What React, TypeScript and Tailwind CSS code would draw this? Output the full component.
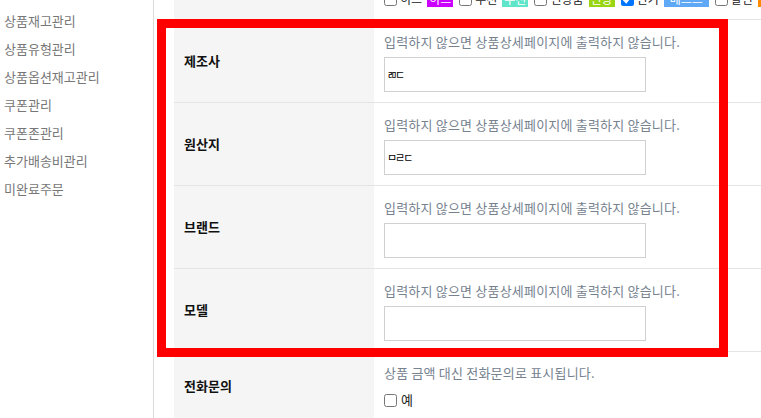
import React from "react";

const menu = ["상품재고관리", "상품유형관리", "상품옵션재고관리", "쿠폰관리", "쿠폰존관리", "추가배송비관리", "미완료주문"];

const types = [
  { label: "히트", badge: "히트", color: "bg-[#cc00ff]", pad: "px-[2px]", checked: false },
  { label: "추천", badge: "추천", color: "bg-[#5fe5c9]", pad: "px-[2px]", checked: false },
  { label: "신상품", badge: "신상", color: "bg-[#99d611]", pad: "px-[2px]", checked: false },
  { label: "인기", badge: "베스트", color: "bg-[#5fa8f5]", pad: "px-[6px]", checked: true },
  { label: "할인", badge: "할인", color: "bg-[#ff8a00]", pad: "px-[2px]", checked: false },
];

const fields = [
  { label: "제조사", value: "ㄻㄷ" },
  { label: "원산지", value: "ㅁㄹㄷ" },
  { label: "브랜드", value: "" },
  { label: "모델", value: "" },
];

const help = "입력하지 않으면 상품상세페이지에 출력하지 않습니다.";

function Row({ label, children, h }: { label: string; children: React.ReactNode; h: string }) {
  return (
    <div className={`flex border-b border-[#e4e4e4] ${h}`}>
      <div className="w-[200px] shrink-0 bg-[#f5f5f5] pl-[10px] flex items-center text-[13px] font-bold text-[#111]">
        {label}
      </div>
      <div className="flex-1 pl-[10px]">{children}</div>
    </div>
  );
}

export default function App() {
  return (
    <div className="relative h-[418px] w-[761px] overflow-hidden bg-white font-['Noto_Sans_CJK_KR',sans-serif]">
      <div className="flex h-full">
        {/* Sidebar */}
        <aside className="w-[154px] shrink-0 border-r border-[#dadada] pt-[7px]">
          {menu.map((m) => (
            <div key={m} className="h-[28px] leading-[28px] pl-[4px] text-[13px] text-[#777]">
              {m}
            </div>
          ))}
        </aside>

        {/* Form table */}
        <main className="flex-1 pl-[20px]">
          <div className="flex h-[20px] border-b border-[#e4e4e4] overflow-hidden">
            <div className="w-[200px] shrink-0 bg-[#f5f5f5]" />
            <div className="flex-1 pl-[10px] flex items-end pb-[12px] overflow-hidden">
              <div className="flex items-center whitespace-nowrap text-[12px] leading-[16px] text-[#222]">
                {types.map((t) => (
                  <div key={t.label} className="flex items-center mr-[6px]">
                    <input type="checkbox" defaultChecked={t.checked} className="m-0 h-[13px] w-[13px] accent-[#0075ff]" />
                    <span className="ml-[3px]">{t.label}</span>
                    <span className={`ml-[5px] ${t.pad} ${t.color} text-white`}>{t.badge}</span>
                  </div>
                ))}
              </div>
            </div>
          </div>

          {fields.map((f) => (
            <Row key={f.label} label={f.label} h="h-[83px]">
              <div className="pt-[13px] text-[13px] tracking-[0.2px] leading-[18px] text-[#76828f]">{help}</div>
              <div className="mt-[6px] h-[35px] w-[262px] border border-[#d0d0d0] bg-white pl-[2px] flex items-center text-[11px] tracking-[-2px] text-black">
                {f.value}
              </div>
            </Row>
          ))}

          <Row label="전화문의" h="h-[68px]">
            <div className="pt-[12px] text-[13px] tracking-[0.2px] leading-[18px] text-[#76828f]">상품 금액 대신 전화문의로 표시됩니다.</div>
            <label className="mt-[11px] flex items-center gap-[4px] text-[13px] leading-[14px] text-[#222]">
              <input type="checkbox" className="m-0 h-[13px] w-[13px]" />
              예
            </label>
          </Row>
        </main>
      </div>

      {/* annotation box */}
      <div className="absolute left-[157px] top-[19px] h-[338px] w-[571px] border-[9px] border-[#ff0000] pointer-events-none" />
    </div>
  );
}
